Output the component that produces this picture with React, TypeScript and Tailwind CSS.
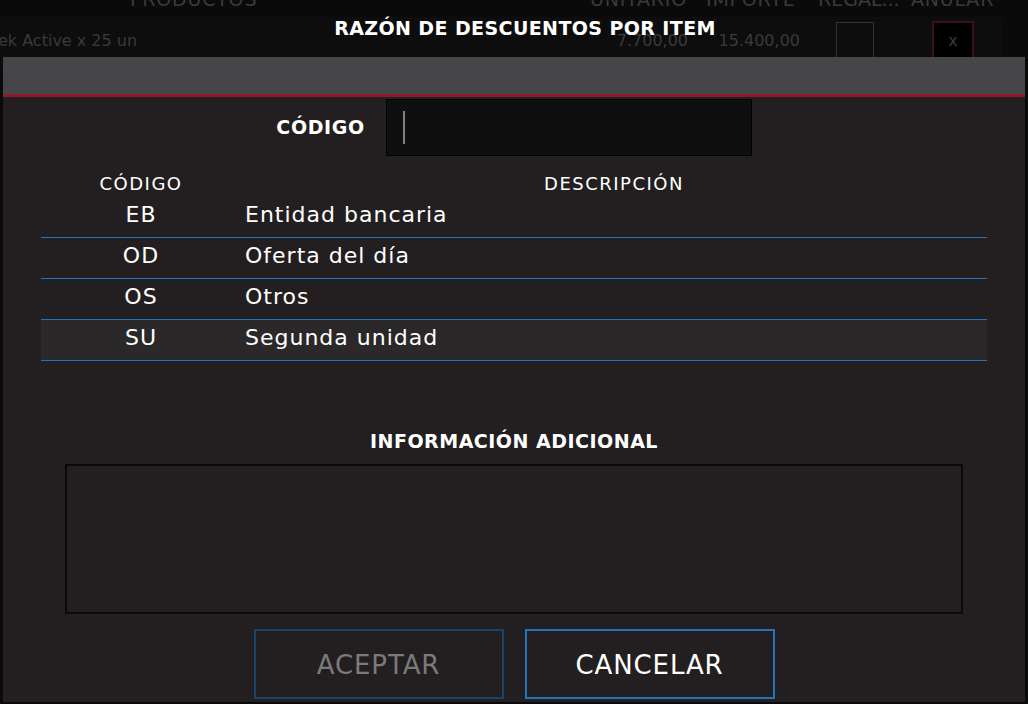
import React from 'react'

const MOTIVOS = [
  { codigo: 'EB', descripcion: 'Entidad bancaria' },
  { codigo: 'OD', descripcion: 'Oferta del día' },
  { codigo: 'OS', descripcion: 'Otros' },
  { codigo: 'SU', descripcion: 'Segunda unidad' },
]

const FONT = { fontFamily: "'DejaVu Sans', 'Open Sans', sans-serif" }

export default function App() {
  const selected = 'SU'

  return (
    <div className="relative w-[1028px] h-[704px] overflow-hidden bg-[#0a0a0a]" style={FONT}>
      {/* Background: ticket table behind the dialog */}
      <div className="text-[#3a3a3a]">
        <div className="flex h-[17px] items-end text-[19px] leading-none tracking-[0.8px] -mt-[8px]">
          <span className="ml-[130px] w-[460px]">PRODUCTOS</span>
          <span className="w-[116px]">UNITARIO</span>
          <span className="w-[112px]">IMPORTE</span>
          <span className="w-[93px] tracking-[0px]">REGAL...</span>
          <span>ANULAR</span>
        </div>
        <div className="flex items-center h-[48px] w-[1003px] bg-[#0d0d0d] mt-[8px]">
          <span className="text-[16px] -ml-[2px] w-[560px]">ek Active x 25 un</span>
          <span className="text-[16px] w-[130px] text-right">7.700,00</span>
          <span className="text-[16px] w-[112px] text-right">15.400,00</span>
          <div className="ml-[36px] w-[38px] h-[38px] border border-[#333]" />
          <div className="ml-[58px] w-[42px] h-[40px] border-2 border-[#3a1118] bg-black flex items-center justify-center text-[16px]">x</div>
        </div>
      </div>

      {/* Dialog overlay */}
      <div className="absolute inset-0 flex flex-col">
        <div className="h-[57px] flex items-center justify-center pl-[22px]">
          <h1 className="text-white font-bold text-[19px] tracking-[0.4px] -mt-[1px]">RAZÓN DE DESCUENTOS POR ITEM</h1>
        </div>

        <div className="ml-[3px] w-[1022px] h-[645px] bg-[#231f20] flex flex-col">
          <div className="h-[40px] bg-[#464547] border-b-[3px] border-[#8e1b2b]" />

          {/* Code input */}
          <div className="flex items-center justify-center gap-[21px] mt-[2px] h-[57px]">
            <label className="text-white font-bold text-[19px] tracking-[0.6px] leading-none">CÓDIGO</label>
            <div className="w-[366px] h-[57px] bg-[#0f0f0f] border border-black flex items-center pl-[16px]">
              <div className="w-[2px] h-[33px] bg-[#808080]" />
            </div>
          </div>

          {/* Table */}
          <div className="mx-[38px] mt-[15px]">
            <div className="flex h-[26px] items-center text-white text-[18px] tracking-[1.5px] leading-none">
              <div className="w-[200px] text-center">CÓDIGO</div>
              <div className="flex-1 text-center">DESCRIPCIÓN</div>
            </div>
            {MOTIVOS.map(m => (
              <div key={m.codigo} className="flex flex-col">
                <div
                  className={`flex h-[40px] items-center text-white text-[22px] tracking-[1px] leading-none ${m.codigo === selected ? 'bg-[#2a2828]' : ''}`}
                >
                  <div className="w-[200px] text-center -mt-[5px]">{m.codigo}</div>
                  <div className="flex-1 pl-[4px] -mt-[5px]">{m.descripcion}</div>
                </div>
                <div className="h-[1px] bg-[#2473bd]" />
              </div>
            ))}
          </div>

          {/* Additional info */}
          <div className="mt-[68px] h-[25px] flex items-center justify-center text-white font-bold text-[19px] tracking-[0.5px] leading-none">
            INFORMACIÓN ADICIONAL
          </div>
          <div className="mx-[62px] mt-[10px] h-[150px] border-2 border-[#0a0a0a]" />

          {/* Buttons */}
          <div className="flex justify-center gap-[21px] mt-[15px]">
            <button className="w-[250px] h-[70px] border-2 border-[#1d4466] text-[#7a7a7a] text-[26px] tracking-[0.9px] pt-[2px]">ACEPTAR</button>
            <button className="w-[250px] h-[70px] border-2 border-[#1f74bb] text-white text-[26px] tracking-[0.9px] pt-[2px]">CANCELAR</button>
          </div>
        </div>
      </div>
    </div>
  )
}
